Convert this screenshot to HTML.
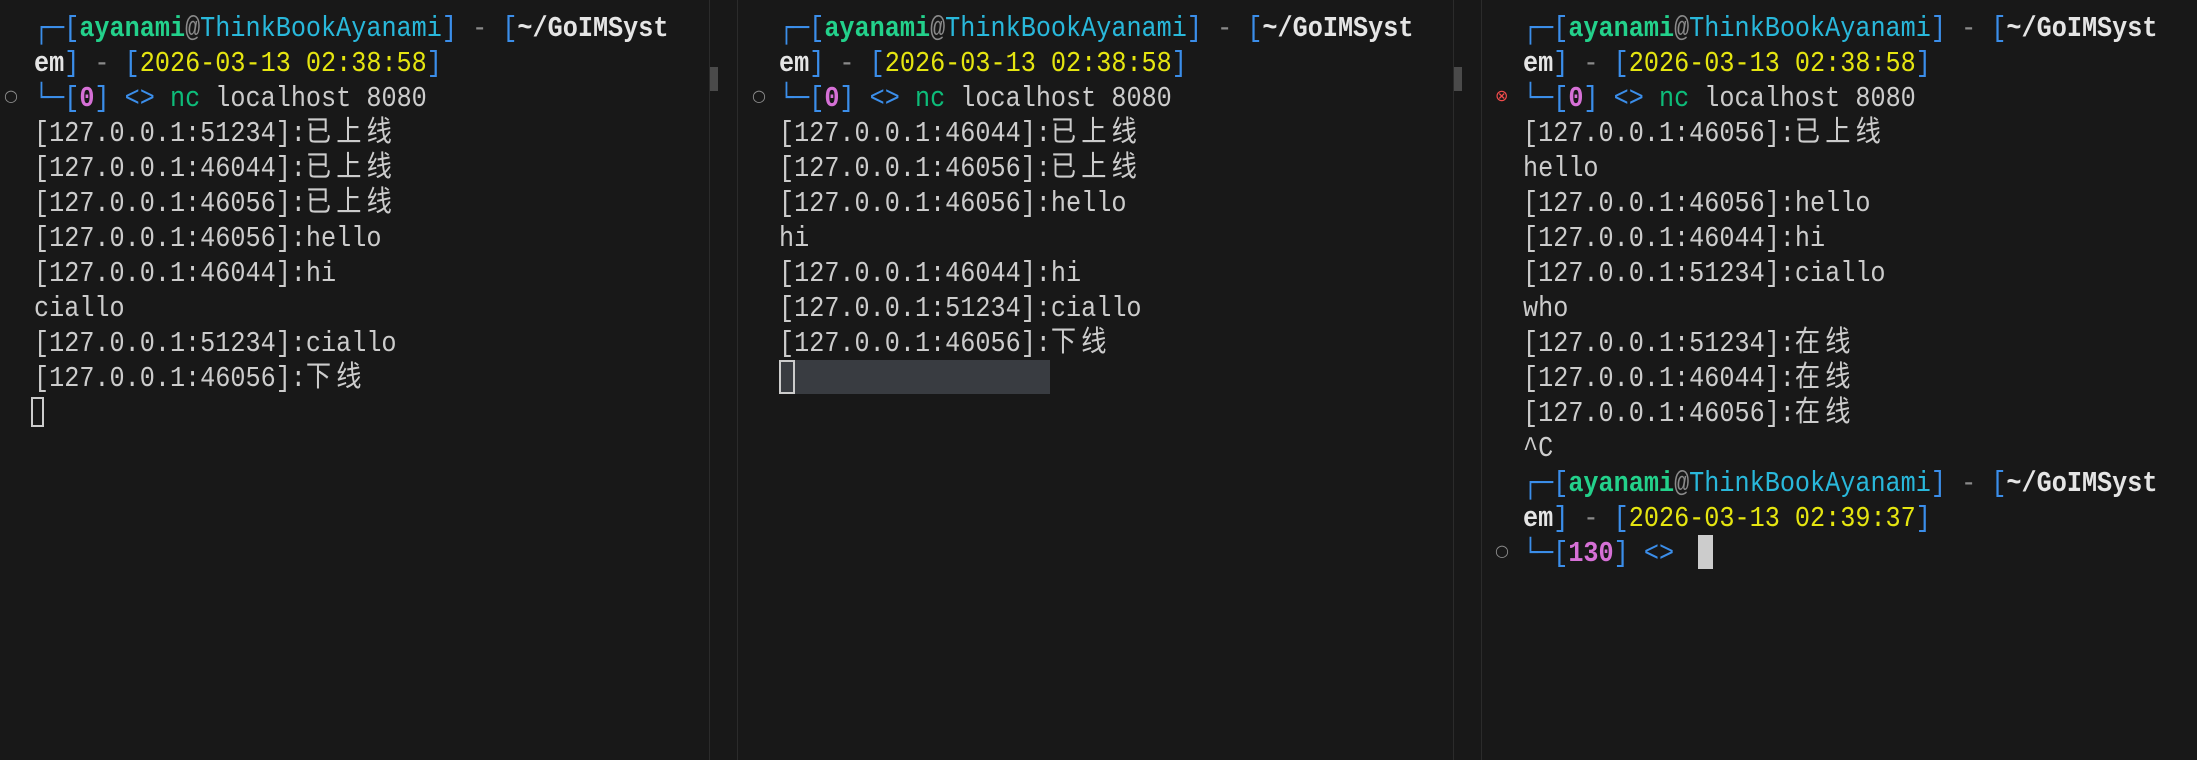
<!DOCTYPE html>
<html><head><meta charset="utf-8"><style>
body{margin:0;width:2197px;height:760px;background:#181818;overflow:hidden;position:relative;font-family:"Liberation Mono","Noto Sans CJK SC",monospace;}
pre{position:absolute;top:11px;margin:0;font-family:"Liberation Mono","Noto Sans CJK SC",monospace;font-size:29px;line-height:35px;color:#cccccc;white-space:pre;transform:scaleX(0.868);transform-origin:0 0;}
.c{letter-spacing:6px}
.g{color:#23d18b;font-weight:bold}.h{color:#29b8db}.b{color:#3b8eea}.y{color:#e5e510}.m{color:#d670d6;font-weight:bold}.w{color:#e5e5e5;font-weight:bold}.d{color:#8a8a8a}.n{color:#0dbc79}
.vl{position:absolute;top:0;width:1px;height:760px;background:#2b2b2b}
.mk{position:absolute;font-size:16px;color:#8a8a8a;font-family:"DejaVu Sans",sans-serif}
</style></head><body>
<div class="vl" style="left:709px"></div><div class="vl" style="left:737px"></div>
<div class="vl" style="left:1453px"></div><div class="vl" style="left:1481px"></div>
<div style="position:absolute;left:710px;top:67px;width:8px;height:24px;background:#4a4a4a"></div>
<div style="position:absolute;left:1454px;top:67px;width:8px;height:24px;background:#4a4a4a"></div>
<div class="mk" style="left:4px;top:86px">○</div>
<div class="mk" style="left:752px;top:86px">○</div>
<div class="mk" style="left:1495px;top:86px;color:#f14c4c">⊗</div>
<div class="mk" style="left:1495px;top:541px">○</div>
<pre style="left:34px"><span class="b">┌─[</span><span class="g">ayanami</span><span class="d">@</span><span class="h">ThinkBookAyanami</span><span class="b">]</span> <span class="d">-</span> <span class="b">[</span><span class="w">~/GoIMSyst</span>
<span class="w">em</span><span class="b">]</span> <span class="d">-</span> <span class="b">[</span><span class="y">2026-03-13 02:38:58</span><span class="b">]</span>
<span class="b">└─[</span><span class="m">0</span><span class="b">]</span> <span class="b">&lt;&gt;</span> <span class="n">nc</span> localhost 8080
[127.0.0.1:51234]:<span class="c">已上线</span>
[127.0.0.1:46044]:<span class="c">已上线</span>
[127.0.0.1:46056]:<span class="c">已上线</span>
[127.0.0.1:46056]:hello
[127.0.0.1:46044]:hi
ciallo
[127.0.0.1:51234]:ciallo
[127.0.0.1:46056]:<span class="c">下线</span></pre>
<div style="position:absolute;left:31px;top:397px;width:13px;height:30px;border:2px solid #cccccc;box-sizing:border-box"></div>
<pre style="left:779px"><span class="b">┌─[</span><span class="g">ayanami</span><span class="d">@</span><span class="h">ThinkBookAyanami</span><span class="b">]</span> <span class="d">-</span> <span class="b">[</span><span class="w">~/GoIMSyst</span>
<span class="w">em</span><span class="b">]</span> <span class="d">-</span> <span class="b">[</span><span class="y">2026-03-13 02:38:58</span><span class="b">]</span>
<span class="b">└─[</span><span class="m">0</span><span class="b">]</span> <span class="b">&lt;&gt;</span> <span class="n">nc</span> localhost 8080
[127.0.0.1:46044]:<span class="c">已上线</span>
[127.0.0.1:46056]:<span class="c">已上线</span>
[127.0.0.1:46056]:hello
hi
[127.0.0.1:46044]:hi
[127.0.0.1:51234]:ciallo
[127.0.0.1:46056]:<span class="c">下线</span></pre>
<div style="position:absolute;left:779px;top:360px;width:271px;height:34px;background:#393c41"></div>
<div style="position:absolute;left:779px;top:360px;width:16px;height:34px;border:2px solid #cccccc;box-sizing:border-box"></div>
<pre style="left:1523px"><span class="b">┌─[</span><span class="g">ayanami</span><span class="d">@</span><span class="h">ThinkBookAyanami</span><span class="b">]</span> <span class="d">-</span> <span class="b">[</span><span class="w">~/GoIMSyst</span>
<span class="w">em</span><span class="b">]</span> <span class="d">-</span> <span class="b">[</span><span class="y">2026-03-13 02:38:58</span><span class="b">]</span>
<span class="b">└─[</span><span class="m">0</span><span class="b">]</span> <span class="b">&lt;&gt;</span> <span class="n">nc</span> localhost 8080
[127.0.0.1:46056]:<span class="c">已上线</span>
hello
[127.0.0.1:46056]:hello
[127.0.0.1:46044]:hi
[127.0.0.1:51234]:ciallo
who
[127.0.0.1:51234]:<span class="c">在线</span>
[127.0.0.1:46044]:<span class="c">在线</span>
[127.0.0.1:46056]:<span class="c">在线</span>
^C
<span class="b">┌─[</span><span class="g">ayanami</span><span class="d">@</span><span class="h">ThinkBookAyanami</span><span class="b">]</span> <span class="d">-</span> <span class="b">[</span><span class="w">~/GoIMSyst</span>
<span class="w">em</span><span class="b">]</span> <span class="d">-</span> <span class="b">[</span><span class="y">2026-03-13 02:39:37</span><span class="b">]</span>
<span class="b">└─[</span><span class="m">130</span><span class="b">]</span> <span class="b">&lt;&gt;</span> </pre>
<div style="position:absolute;left:1698px;top:535px;width:15px;height:34px;background:#cccccc"></div>
</body></html>
